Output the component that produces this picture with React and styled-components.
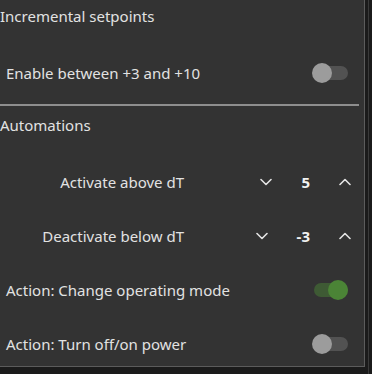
import React, { useState } from "react";
import styled, { createGlobalStyle } from "styled-components";

const GlobalStyle = createGlobalStyle`
  html, body {
    margin: 0;
    padding: 0;
    background: #1b1b1b;
  }
  body {
    font-family: "Noto Sans", "Open Sans", sans-serif;
    overflow: hidden;
  }
`;

const Chevron = ({ up }) => (
  <svg width="12" height="8" viewBox="0 0 12 8" fill="none">
    <path
      d={up ? "M1 6.5 L6 1.5 L11 6.5" : "M1 1.5 L6 6.5 L11 1.5"}
      stroke="#e4e4e4"
      strokeWidth="1.6"
      strokeLinecap="round"
      strokeLinejoin="round"
    />
  </svg>
);

const Toggle = ({ on, onChange }) => (
  <Switch type="button" $on={on} onClick={() => onChange(!on)}>
    <span className="track" />
    <span className="thumb" />
  </Switch>
);

const Stepper = ({ value, onChange }) => (
  <StepperBox>
    <StepButton type="button" onClick={() => onChange(value - 1)}>
      <Chevron />
    </StepButton>
    <Value>{value}</Value>
    <StepButton type="button" onClick={() => onChange(value + 1)}>
      <Chevron up />
    </StepButton>
  </StepperBox>
);

const App = () => {
  const [incremental, setIncremental] = useState(false);
  const [above, setAbove] = useState(5);
  const [below, setBelow] = useState(-3);
  const [changeMode, setChangeMode] = useState(true);
  const [power, setPower] = useState(false);

  return (
    <Screen>
      <GlobalStyle />
      <Panel>
        <SectionTitle $h={32}>Incremental setpoints</SectionTitle>
        <ToggleRow $top={14}>
          <span>Enable between +3 and +10</span>
          <Toggle on={incremental} onChange={setIncremental} />
        </ToggleRow>
        <Divider />
        <SectionTitle $h={38}>Automations</SectionTitle>
        <StepRow $top={11}>
          <StepLabel>Activate above dT</StepLabel>
          <Stepper value={above} onChange={setAbove} />
        </StepRow>
        <StepRow>
          <StepLabel>Deactivate below dT</StepLabel>
          <Stepper value={below} onChange={setBelow} />
        </StepRow>
        <ToggleRow>
          <span>Action: Change operating mode</span>
          <Toggle on={changeMode} onChange={setChangeMode} />
        </ToggleRow>
        <ToggleRow>
          <span>Action: Turn off/on power</span>
          <Toggle on={power} onChange={setPower} />
        </ToggleRow>
      </Panel>
      <Edge />
    </Screen>
  );
};

const Screen = styled.div`
  display: flex;
  align-items: flex-start;
  width: 372px;
  height: 374px;
  overflow: hidden;
`;

const Panel = styled.div`
  width: 364px;
  height: 366px;
  flex-shrink: 0;
  background: #333333;
  border-right: 1px solid #5c5c5c;
  border-bottom: 1px solid #5c5c5c;
  color: #e2e2e2;
  font-size: 15px;
  overflow: hidden;
  display: flex;
  flex-direction: column;
`;

const Edge = styled.div`
  width: 1px;
  height: 374px;
  margin-left: 3px;
  background: #3a3a3a;
`;

const SectionTitle = styled.div`
  height: ${(p) => p.$h}px;
  flex-shrink: 0;
  display: flex;
  align-items: center;
  padding-left: 0;
`;

const ToggleRow = styled.div`
  height: 54px;
  flex-shrink: 0;
  margin-top: ${(p) => p.$top || 0}px;
  display: flex;
  align-items: center;
  justify-content: space-between;
  padding: 0 16px 0 6px;
`;

const Divider = styled.div`
  height: 2px;
  flex-shrink: 0;
  width: 359px;
  margin-top: 4px;
  background: #8e8e8e;
`;

const StepRow = styled.div`
  height: 54px;
  flex-shrink: 0;
  margin-top: ${(p) => p.$top || 0}px;
  display: grid;
  grid-template-columns: 184px 1fr;
  align-items: center;
`;

const StepLabel = styled.span`
  text-align: right;
`;

const StepperBox = styled.div`
  display: flex;
  align-items: center;
  justify-content: flex-end;
  gap: 20px;
  padding-right: 4px;
`;

const StepButton = styled.button`
  width: 30px;
  height: 30px;
  padding: 0;
  border: none;
  background: transparent;
  display: flex;
  align-items: center;
  justify-content: center;
  cursor: pointer;
`;

const Value = styled.span`
  font-weight: 700;
  color: #f2f2f2;
`;

const Switch = styled.button`
  position: relative;
  width: 36px;
  height: 20px;
  padding: 0;
  border: none;
  background: transparent;
  cursor: pointer;

  .track {
    position: absolute;
    left: 2px;
    right: 0;
    top: 3px;
    height: 14px;
    border-radius: 7px;
    background: ${(p) => (p.$on ? "#3e5a34" : "#525252")};
  }
  .thumb {
    position: absolute;
    top: 0;
    left: ${(p) => (p.$on ? "16px" : "0")};
    width: 20px;
    height: 20px;
    border-radius: 50%;
    background: ${(p) => (p.$on ? "#4b8436" : "#9c9c9c")};
  }
`;

export default App;
